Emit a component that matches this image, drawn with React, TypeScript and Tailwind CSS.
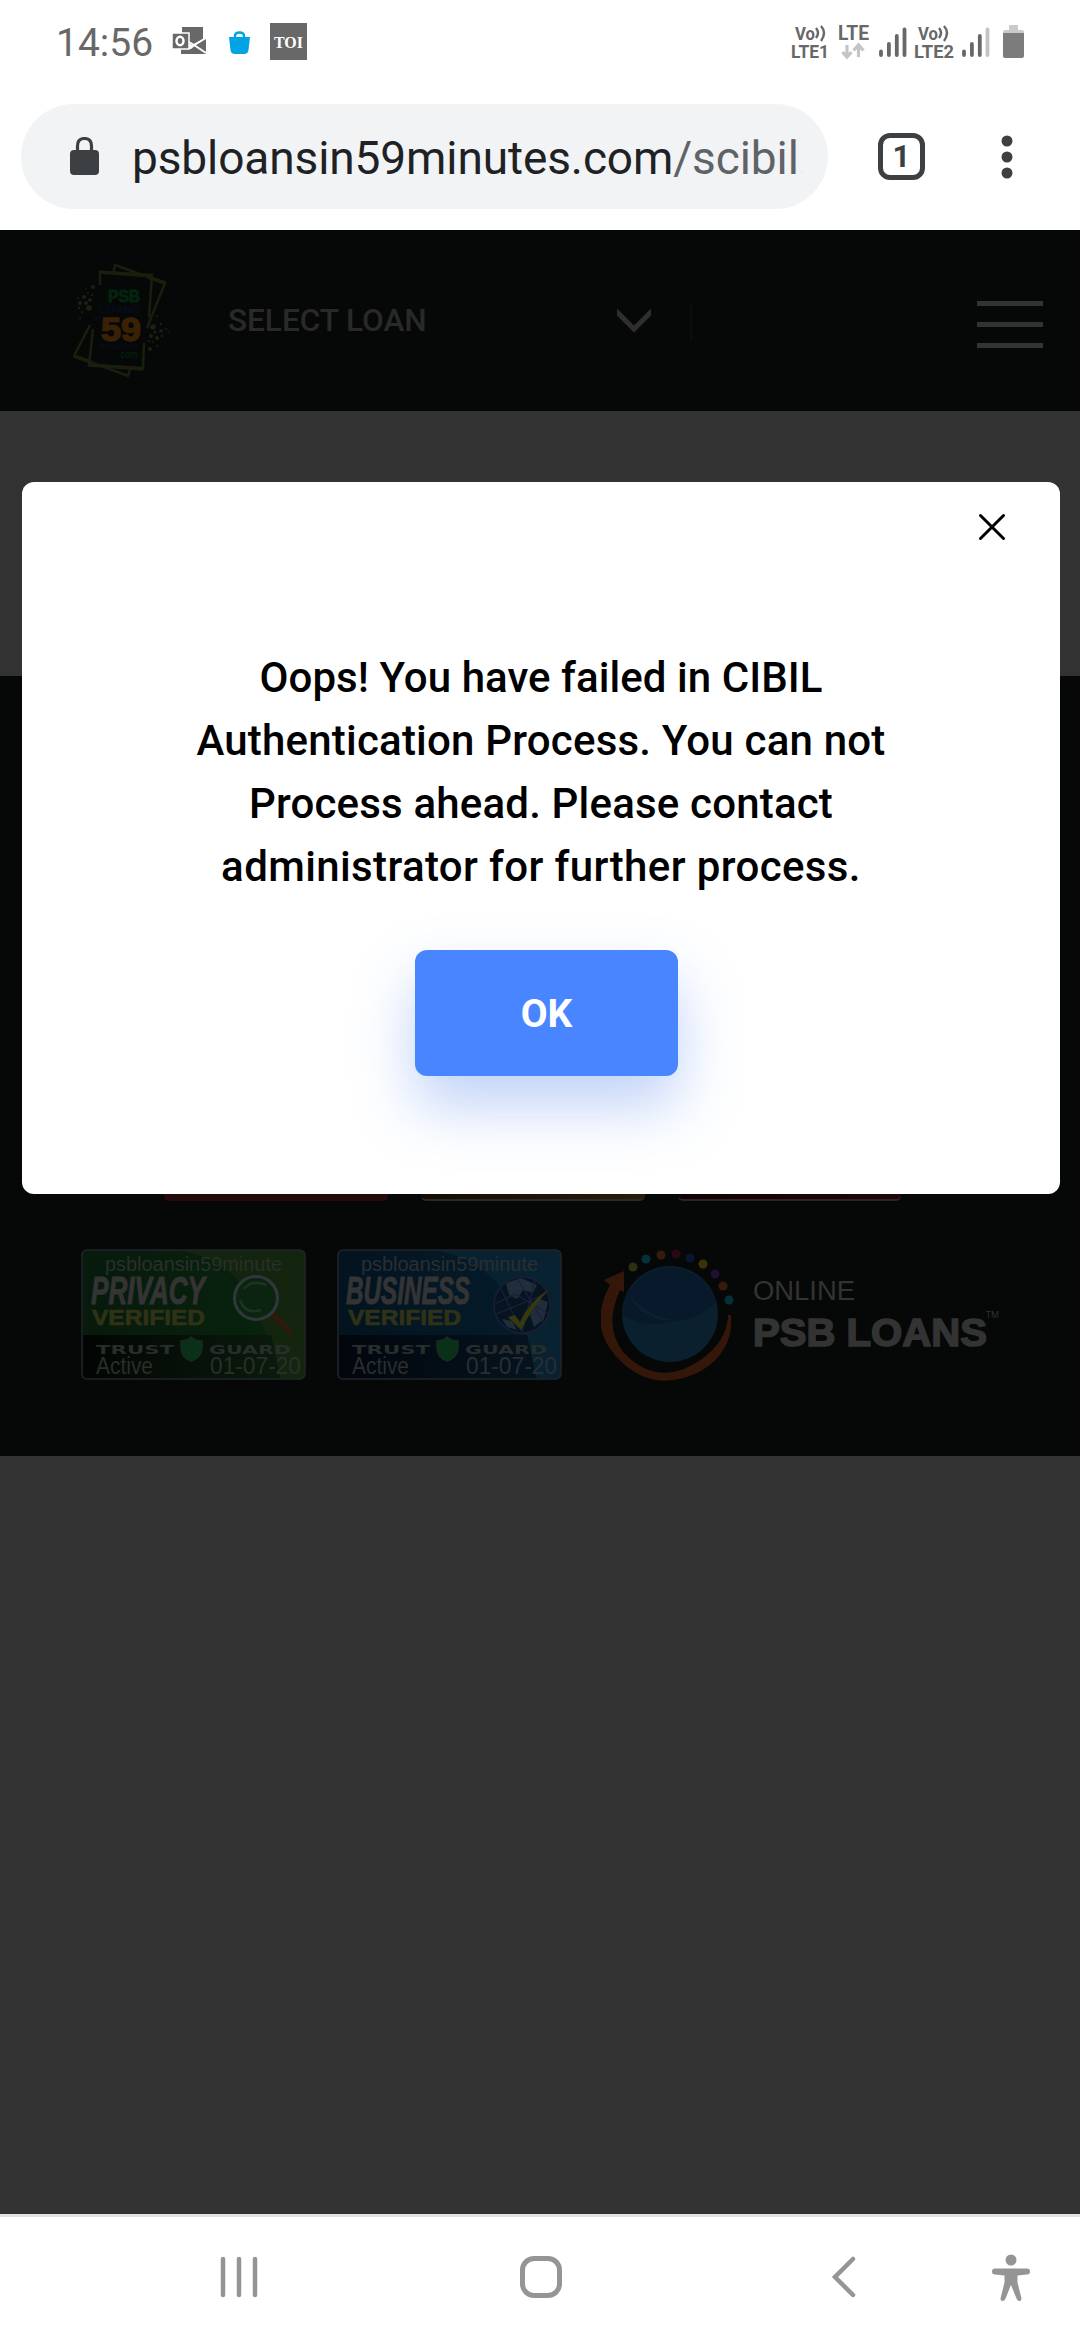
import React from "react";

function VoLte({ label, width }: { label: string; width: number }) {
  return (
    <svg className="overflow-visible" width={width} height="36" viewBox={`0 0 ${width} 36`} fill="#686868" fontFamily="Roboto" fontWeight="700">
      <text x="4" y="16" fontSize="19" textLength="20" lengthAdjust="spacingAndGlyphs">Vo</text>
      <path d="M25 4q4 4.500 0 10M30 2q6 6.500 0 15" stroke="#686868" strokeWidth="2.400" fill="none" />
      <text x="0" y="34" fontSize="18.500" textLength={width - 1} lengthAdjust="spacingAndGlyphs">{label}</text>
    </svg>
  );
}

function Signal({ weak = false }: { weak?: boolean }) {
  return (
    <svg width="28" height="34" viewBox="0 0 28 34" stroke="#686868" strokeWidth="3.800" strokeLinecap="round">
      <path d="M2 26.500v3.500M9.900 19v11M17.800 11v19" />
      <path d="M25.500 4.500v25.500" stroke={weak ? "#c4c4c4" : "#686868"} />
    </svg>
  );
}

function StatusBar() {
  return (
    <div className="flex h-[84px] items-center px-[56px] text-[#686868]">
      <span className="mt-[3px] w-[116px] text-[39px] leading-none">14:56</span>
      <svg className="mt-[-2px]" width="36" height="28" viewBox="0 0 36 28">
        <path d="M10 0h21v12L20 18 10 12z M9 22h10l5-4 10 7v2H9z M34 11v14l-10-7z" fill="#686868" />
        <path d="M17 15l5 3 12-7M22 18l12 8" stroke="#fff" strokeWidth="2" fill="none" />
        <path d="M0 6h17v16H0z" fill="#686868" stroke="#fff" strokeWidth="1.500" />
        <ellipse cx="8" cy="14" rx="3.500" ry="4.200" stroke="#fff" strokeWidth="2.500" fill="none" />
      </svg>
      <svg className="ml-[21px] mt-[1px]" width="21" height="23" viewBox="0 0 21 23">
        <path d="M0 6h21l-1.500 13q-.5 4-4.500 4H6q-4 0-4.500-4z" fill="#00a3e4" />
        <path d="M6 7V5q0-3.500 4.500-3.500T15 5v2" stroke="#00a3e4" strokeWidth="2.500" fill="none" />
      </svg>
      <div className="ml-[20px] mt-[-1px] flex h-[37px] w-[37px] items-center justify-center bg-[#686868]">
        <svg width="37" height="37" viewBox="0 0 37 37">
          <text x="4" y="25" fontFamily="Liberation Serif" fontWeight="700" fontSize="17" fill="#fff" textLength="29" lengthAdjust="spacingAndGlyphs">TOI</text>
        </svg>
      </div>
      <div className="ml-auto flex items-center">
        <VoLte label="LTE1" width={39} />
        <svg className="ml-[8px] overflow-visible" width="32" height="36" viewBox="0 0 32 36">
          <text x="0" y="16" fontFamily="Roboto" fontWeight="700" fontSize="19.500" fill="#686868" textLength="31" lengthAdjust="spacingAndGlyphs">LTE</text>
          <path d="M9 21v12M4.500 28L9 33l4.500-5M20.500 33V22M15.500 26.500l5-5.500 5 5.500" stroke="#c4c4c4" strokeWidth="3.200" fill="none" />
        </svg>
        <div className="ml-[9px]"><Signal /></div>
        <div className="ml-[7px]"><VoLte label="LTE2" width={41} /></div>
        <div className="ml-[7px]"><Signal weak /></div>
        <svg className="ml-[13px]" width="21" height="34" viewBox="0 0 21 34">
          <path d="M6 0h9v5h4q2 0 2 2v3H0V7q0-2 2-2h4z" fill="#cacaca" />
          <path d="M0 8h21v23q0 2-2 2H2q-2 0-2-2z" fill="#7c7c7c" />
        </svg>
      </div>
    </div>
  );
}

function BrowserBar() {
  return (
    <div className="flex h-[146px] items-center pb-[1px] pl-[21px]">
      <div className="mt-[-1px] flex h-[105px] w-[807px] shrink-0 items-center rounded-full bg-[#f1f3f5] pl-[49px]">
        <svg width="29" height="38" viewBox="0 0 29 38">
          <rect x="0" y="13" width="29" height="25" rx="4" fill="#3c4043" />
          <path d="M7.500 14V9q0-7.500 7-7.500t7 7.500v5" stroke="#3c4043" strokeWidth="3.200" fill="none" />
        </svg>
        <div className="ml-[33px] mt-[4px] w-[670px] overflow-hidden whitespace-nowrap text-[46px] leading-[60px] tracking-[-0.100px] text-[#202124]">
          psbloansin59minutes.com<span className="text-[#5f6368]">/scibil.</span>
        </div>
      </div>
      <div className="ml-[50px] flex h-[47px] w-[47px] items-center justify-center rounded-[12px] border-[5px] border-[#3c4043] text-[31px] font-bold leading-none text-[#3c4043]">1</div>
      <svg className="ml-[76px]" width="12" height="44" viewBox="0 0 12 44" fill="#3c4043">
        <circle cx="6" cy="6" r="5.500" />
        <circle cx="6" cy="22" r="5.500" />
        <circle cx="6" cy="38" r="5.500" />
      </svg>
    </div>
  );
}

function PsbLogo() {
  const dots: [number, number, number][] = [
    [20, 24, 2], [11, 34, 2], [17, 37, 2], [13, 40, 2], [7, 40, 2], [16, 45, 2.8], [5, 35, 1], [9, 49, 1.2], [7, 55, 1], [15, 30, 1], [6, 45, 1.2], [19, 32, 1.2], [13, 26, 0.8],
    [80, 64, 2.8], [82, 69, 1.600], [88, 68, 1.800], [78, 73, 2], [84, 75, 2], [89, 73, 1.200], [77, 86, 2], [84, 83, 1], [93, 66, 1], [96, 69, 0.8], [88, 61, 1.200], [84, 53, 1], [92, 57, 0.7], [76, 78, 1], [80, 79, 1],
  ];
  return (
    <svg width="98" height="116" viewBox="0 0 98 116">
      <g fill="none" stroke="#181f0d">
        <path d="M40 11L42 2l50 18-18 45M17 62L1 93l54 20 3-9" strokeWidth="2.500" />
        <path d="M27 22V9l52 3-3 42M20 66l-4 36 54 3 1-25" strokeWidth="2.500" />
        <path d="M27 9l52 4M16 102l54 4M1 93l17 6M75 14l17 6" strokeWidth="3.500" />
      </g>
      <g fill="#1b2111">{dots.map(([x, y, r], i) => <circle key={i} cx={x} cy={y} r={r} />)}</g>
      <g fontFamily="Liberation Sans" fontWeight="700">
        <text x="35" y="39" fontSize="16" fill="#03240f" stroke="#03240f" textLength="32" lengthAdjust="spacingAndGlyphs">PSB</text>
        <text x="26" y="50" fontSize="11" fill="#090b1b" textLength="41" lengthAdjust="spacingAndGlyphs">LOANS</text>
        <text x="20" y="58" fontSize="7" fill="#090b1b">IN</text>
        <text x="28" y="78" fontSize="34" fill="#3a2104" stroke="#3a2104" strokeWidth="1.500" textLength="40" lengthAdjust="spacingAndGlyphs">59</text>
        <text x="27" y="86" fontSize="7.500" fill="#090b1b" textLength="38" lengthAdjust="spacingAndGlyphs">MINUTES</text>
        <text x="45" y="95" fontSize="10" fill="#04230f" fontWeight="400" textLength="20" lengthAdjust="spacingAndGlyphs">.com</text>
      </g>
    </svg>
  );
}

function SiteHeader() {
  return (
    <header className="flex h-[181px] items-center bg-[#060807] pl-[73px] pr-[37px]">
      <PsbLogo />
      <span className="ml-[57px] w-[200px] whitespace-nowrap text-[31.500px] font-medium leading-none text-[#292929]">SELECT LOAN</span>
      <svg className="ml-[189px]" width="34" height="24" viewBox="0 0 34 24">
        <path d="M-2 1L17 20 36 1" stroke="#2f2f2f" strokeWidth="5" fill="none" />
      </svg>
      <div className="ml-[39px] h-[38px] w-[2px] bg-[#0b0d0c]" />
      <div className="ml-auto mt-[8px] flex w-[66px] flex-col gap-[16px]">
        <div className="h-[5px] bg-[#333333]" />
        <div className="h-[5px] bg-[#333333]" />
        <div className="h-[5px] bg-[#333333]" />
      </div>
    </header>
  );
}

function Seal({ kind }: { kind: "PRIVACY" | "BUSINESS" }) {
  const green = kind === "PRIVACY";
  const id = green ? "seal-green" : "seal-blue";
  return (
    <svg width="225" height="131" viewBox="0 0 225 131">
      <defs>
        <linearGradient id={id} x1="0" x2="1" y1="0" y2="0">
          <stop offset="0" stopColor={green ? "#071a0c" : "#03131f"} />
          <stop offset="1" stopColor={green ? "#08240e" : "#051d2c"} />
        </linearGradient>
        <linearGradient id={id + "-foot"} x1="0" x2="1" y1="0" y2="0">
          <stop offset="0" stopColor={green ? "#020503" : "#02060c"} />
          <stop offset="1" stopColor={green ? "#0a1b0c" : "#04141f"} />
        </linearGradient>
      </defs>
      <rect x="1" y="1" width="223" height="129" rx="5" fill={`url(#${id})`} />
      <path d="M100 1Q160 15 178 65T200 130H219q5 0 5-5V6q0-5-5-5z" fill={green ? "#13240f" : "#092231"} />
      <path d="M2 86H190L200 130H6q-4 0-4-5z" fill={`url(#${id}-foot)`} />
      <rect x="1" y="1" width="223" height="129" rx="5" fill="none" stroke="#20242a" strokeWidth="1.500" />
      <g fontFamily="Liberation Sans" fill={green ? "#292f2a" : "#2a2e31"}>
        <text x="24" y="22" fontSize="20" textLength="177" lengthAdjust="spacingAndGlyphs">psbloansin59minute</text>
        <text x="15" y="125" fontSize="23" textLength="57" lengthAdjust="spacingAndGlyphs">Active</text>
        <text x="129" y="125" fontSize="23" textLength="91" lengthAdjust="spacingAndGlyphs">01-07-20</text>
      </g>
      <text x={green ? 10 : 9} y="55" fontFamily="Liberation Sans" fontStyle="italic" fontWeight="700" fontSize="38" fill="#343434" stroke="#343434" strokeWidth="1" textLength={green ? 114 : 124} lengthAdjust="spacingAndGlyphs">{kind}</text>
      <text x="11" y="76" fontFamily="Liberation Sans" fontWeight="700" fontSize="22" fill="#303216" stroke="#303216" strokeWidth=".7" textLength="113" lengthAdjust="spacingAndGlyphs">VERIFIED</text>
      <g fontFamily="DejaVu Sans" fontWeight="700" fontSize="13" fill="#292d2c">
        <text x="15" y="105" textLength="78" lengthAdjust="spacingAndGlyphs">TRUST</text>
        <text x="128" y="105" textLength="82" lengthAdjust="spacingAndGlyphs">GUARD</text>
      </g>
      <path d="M100 92q6 0 10-4 5 4 11 4v8q-1 9-11 12-9-3-10-12z" fill="#083117" stroke="#1c2820" strokeWidth="1.500" />
      {green ? (
        <g fill="none">
          <path d="M190 63l20 21" stroke="#2f1a0b" strokeWidth="5.500" />
          <circle cx="175" cy="49" r="21.500" fill="#0b2411" stroke="#30373a" strokeWidth="3.200" />
          <path d="M159 51q5 15 21 10M163 40q8-10 22-4" stroke="#1c3522" strokeWidth="2.500" />
        </g>
      ) : (
        <g>
          <circle cx="185" cy="56" r="28" fill="#061321" stroke="#1b1e34" strokeWidth="1.500" />
          <path d="M169 34l15-5 16 7-4 8-10-3-6 9-8-4zM200 49l11 4-4 17-10 8-4-12zM165 70l10 2 5 9-10-3z" fill="#202d3a" />
          <path d="M158 55l20-10 34 20M163 38l22 45M180 29l30 50M159 65l50-20M185 83l13-52" stroke="#1d203b" strokeWidth="1.200" fill="none" />
          <path d="M171 68l7-2 5 7q8-19 29-33-17 19-28 41z" fill="#36380e" />
        </g>
      )}
    </svg>
  );
}

function OnlineLogo() {
  const dots: [number, number, string][] = [
    [32, 18, "#2c3010"], [45, 10, "#08303a"], [60, 6, "#361b0d"], [75, 5, "#280913"], [89, 9, "#091431"],
    [102, 15, "#393309"], [114, 25, "#20102f"], [122, 37, "#361b0d"], [128, 51, "#08303a"],
  ];
  return (
    <svg width="400" height="133" viewBox="0 0 400 133">
      <path d="M3 31L23 22v21l-4-2Q2 78 23 104q34 35 75 8 29-20 29-46h3q3 36-30 56-43 22-76-6-40-34-15-80z" fill="#341709" />
      <circle cx="69" cy="65" r="48" fill="#0b202e" />
      <path d="M21 66A48 48 0 0 1 115 53q-19 19-44 19-23 9-50-6z" fill="#07192a" />
      <path d="M26 44q11 20 33 27h13q-25-3-46-27z" fill="#0b2030" />
      {dots.map(([x, y, c], i) => <circle key={i} cx={x} cy={y} r="4.500" fill={c} />)}
      <g fill="#333333">
        <text x="152" y="51" fontFamily="Liberation Sans" fontSize="27" textLength="102" lengthAdjust="spacingAndGlyphs">ONLINE</text>
        <text x="152" y="97" fontFamily="Liberation Sans" fontWeight="700" fontSize="38.500" stroke="#333333" strokeWidth="1.600" textLength="234" lengthAdjust="spacingAndGlyphs">PSB LOANS</text>
        <text x="385" y="69" fontFamily="Open Sans" fontSize="9" textLength="13" lengthAdjust="spacingAndGlyphs">TM</text>
      </g>
    </svg>
  );
}

function Footer() {
  return (
    <footer className="flex h-[780px] flex-col justify-end bg-[#060807] pb-[76px]">
      <div className="flex h-[60px] gap-[33px] pl-[164px]">
        <div className="w-[224px] rounded-b-[5px] bg-[#260909]" />
        <div className="w-[224px] rounded-b-[5px] border-b-2 border-[#29292b] bg-linear-to-r from-[#150c02] to-[#291b09]" />
        <div className="w-[223px] rounded-b-[5px] border-b-2 border-[#2b2527] bg-linear-to-r from-[#120203] to-[#210507]" />
      </div>
      <div className="flex h-[179px] items-start pl-[81px] pt-[48px]">
        <Seal kind="PRIVACY" />
        <div className="ml-[31px]"><Seal kind="BUSINESS" /></div>
        <div className="ml-[39px]"><OnlineLogo /></div>
      </div>
    </footer>
  );
}

function Modal() {
  return (
    <div className="absolute left-[22px] top-[482px] flex h-[712px] w-[1038px] flex-col items-center overflow-hidden rounded-[12px] bg-white">
      <div className="flex h-[89px] w-full items-center justify-end pr-[54px]">
        <svg width="28" height="28" viewBox="0 0 28 28">
          <path d="M2.500 2.500l23 23M25.500 2.500l-23 23" stroke="#000" strokeWidth="3" strokeLinecap="round" />
        </svg>
      </div>
      <p className="mt-[75px] whitespace-nowrap text-center text-[42px] font-medium leading-[63px] text-black">
        <span className="tracking-[0.060px]">Oops! You have failed in CIBIL</span><br />
        <span className="tracking-[0.200px]">Authentication Process. You can not</span><br />
        <span className="tracking-[0.180px]">Process ahead. Please contact</span><br />
        <span className="tracking-[0.380px]">administrator for further process.</span>
      </p>
      <button className="ml-[11px] mt-[52px] h-[126px] w-[263px] shrink-0 rounded-[12px] bg-[#4885ff] pt-[2px] text-[39px] font-bold text-white shadow-[0_30px_60px_rgba(72,127,235,0.35)]">OK</button>
    </div>
  );
}

function NavBar() {
  return (
    <nav className="flex h-[126px] items-start border-t-[3px] border-[#e2e2e2] bg-white pl-[220px] pt-[36px]">
      <svg className="mt-[3px]" width="40" height="42" viewBox="0 0 40 42">
        <path d="M3 3v36M19 3v36M35 3v36" stroke="#959595" strokeWidth="4.500" strokeLinecap="round" />
      </svg>
      <div className="ml-[260px] mt-[3px] h-[42px] w-[42px] rounded-[14px] border-[5px] border-[#959595]" />
      <svg className="ml-[269px] mt-[3px]" width="26" height="42" viewBox="0 0 26 42">
        <path d="M22 3L4 21l18 18" stroke="#959595" strokeWidth="4.500" strokeLinecap="round" fill="none" />
      </svg>
      <svg className="ml-[135px]" width="38" height="48" viewBox="0 0 38 48" fill="#959595">
        <circle cx="19" cy="7" r="5.500" />
        <path d="M3 15.500h32q3 0 3 3t-3 3l-9.500 1v7l4 16q0 2.500-2 2.500t-3-2.500L19 32l-5.500 13.500q-1 2.500-3 2.500t-2-2.500l4-16v-7L3 21.500q-3 0-3-3t3-3z" />
      </svg>
    </nav>
  );
}

export default function App() {
  return (
    <div className="relative flex h-[2340px] w-[1080px] flex-col overflow-hidden bg-white font-['Roboto',sans-serif]">
      <StatusBar />
      <BrowserBar />
      <SiteHeader />
      <main className="h-[265px] bg-[#323232]" />
      <Footer />
      <div className="h-[758px] bg-[#323232]" />
      <NavBar />
      <Modal />
    </div>
  );
}
